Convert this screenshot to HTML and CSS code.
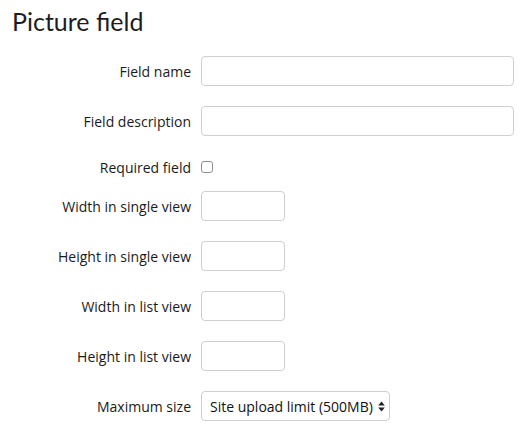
FILE: index.html
```html
<!DOCTYPE html>
<html>
<head>
<meta charset="utf-8">
<link rel="stylesheet" href="styles.css">
</head>
<body>
<h2 class="title">Picture field</h2>
<form class="form">
  <div class="row">
    <label class="lbl">Field name</label>
    <input class="inp inp-wide" type="text">
  </div>
  <div class="row">
    <label class="lbl">Field description</label>
    <input class="inp inp-wide" type="text">
  </div>
  <div class="row row-check">
    <label class="lbl">Required field</label>
    <span class="check"></span>
  </div>
  <div class="row">
    <label class="lbl">Width in single view</label>
    <input class="inp inp-small" type="text">
  </div>
  <div class="row">
    <label class="lbl">Height in single view</label>
    <input class="inp inp-small" type="text">
  </div>
  <div class="row">
    <label class="lbl">Width in list view</label>
    <input class="inp inp-small" type="text">
  </div>
  <div class="row">
    <label class="lbl">Height in list view</label>
    <input class="inp inp-small" type="text">
  </div>
  <div class="row">
    <label class="lbl">Maximum size</label>
    <div class="select">
      <span class="select-text">Site upload limit (500MB)</span>
      <svg class="arrows" width="7" height="11" viewBox="0 0 7 11"><path d="M3.5 0.5 L6.8 4.5 L0.2 4.5 Z" fill="#222"/><path d="M3.5 10.5 L6.8 6.5 L0.2 6.5 Z" fill="#222"/></svg>
    </div>
  </div>
</form>
</body>
</html>
```

FILE: styles.css
```css
html, body {
  margin: 0;
  padding: 0;
  background: #fff;
}
body {
  font-family: "Open Sans", "Liberation Sans", sans-serif;
  color: #373a3c;
  font-size: 14px;
}
.title {
  margin: 0;
  padding: 6px 0 0 12px;
  font-family: Lato, "Open Sans", sans-serif;
  font-weight: 400;
  font-size: 25px;
  line-height: 30px;
  color: #1d1d1d;
}
.form {
  padding-top: 20px;
  display: flex;
  flex-direction: column;
  gap: 20px;
}
.row {
  display: flex;
  align-items: center;
  height: 30px;
}
.row-check {
  height: 22px;
  margin-bottom: -7px;
}
.lbl {
  width: 201px;
  flex: none;
  text-align: right;
  padding-right: 10px;
  box-sizing: border-box;
  font-size: 14px;
  color: #1a1a1a;
}
.inp {
  box-sizing: border-box;
  height: 30px;
  border: 1px solid #cfcfcf;
  border-radius: 4px;
  background: #fff;
  margin: 0;
  padding: 0 8px;
  outline: none;
}
.inp-wide { width: 313px; }
.inp-small { width: 84px; }
.check {
  display: block;
  width: 12px;
  height: 12px;
  box-sizing: border-box;
  border: 1px solid #8e8e8e;
  border-radius: 3px;
  background: #fff;
}
.select {
  box-sizing: border-box;
  height: 30px;
  width: 189px;
  border: 1px solid #cfcfcf;
  border-radius: 4px;
  display: flex;
  align-items: center;
  justify-content: space-between;
  padding: 0 4px 0 8px;
}
.select-text {
  font-size: 14px;
  color: #111;
}
.arrows { display: block; }
```
